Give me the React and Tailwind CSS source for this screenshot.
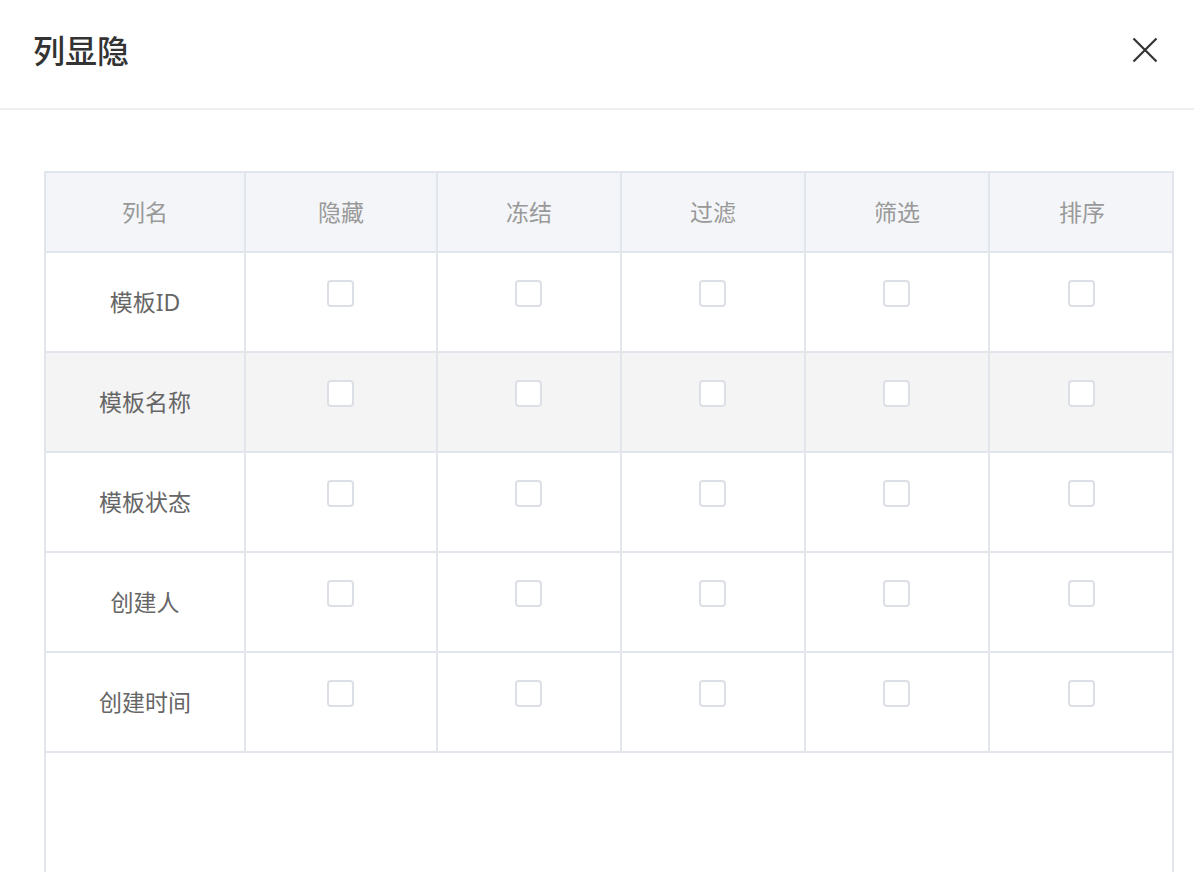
const COLUMNS = ['列名', '隐藏', '冻结', '过滤', '筛选', '排序']
const ROWS = ['模板ID', '模板名称', '模板状态', '创建人', '创建时间']

const GRID = 'grid grid-cols-[200px_192px_184px_184px_184px_184px]'

function Checkbox() {
  return <span className="block w-[27px] h-[27px] rounded-[4px] border-2 border-[#dcdfe6] bg-white -ml-[1px]" />
}

export default function App() {
  return (
    <div
      className="h-[872px] overflow-hidden bg-white"
      style={{ fontFamily: '"Noto Sans", "Noto Sans CJK SC", sans-serif' }}
    >
      {/* Header */}
      <div className="h-[110px] flex items-center justify-between pl-[33px] pr-[36px] border-b-2 border-[#eeeeee]">
        <h1 className="text-[32px] font-medium text-[#333333] leading-none -mt-[6px]">列显隐</h1>
        <button aria-label="关闭" className="w-[26px] h-[26px] flex items-center justify-center -mt-[8px]">
          <svg width="26" height="26" viewBox="0 0 26 26" fill="none" stroke="#333" strokeWidth="2.2">
            <path d="M1.5 1.5 L24.5 24.5 M24.5 1.5 L1.5 24.5" />
          </svg>
        </button>
      </div>

      {/* Table */}
      <div className="pt-[61px] pl-[44px]">
        <div className="w-[1130px] h-[760px] border-l-2 border-t-2 border-r-2 border-[#e1e6ec]">
          <div className={`${GRID} h-[80px] bg-[#f3f5f8]`}>
            {COLUMNS.map((c, i) => (
              <div
                key={c}
                className={[
                  'flex items-center justify-center text-[23px] text-[#999999] border-b-2 border-[#e1e6ec]',
                  i < COLUMNS.length - 1 ? 'border-r-2' : '',
                ].join(' ')}
              >
                {c}
              </div>
            ))}
          </div>
          {ROWS.map((r, ri) => (
            <div key={r} className={`${GRID} h-[100px] ${ri === 1 ? 'bg-[#f4f4f4]' : 'bg-white'}`}>
              <div className="flex items-center justify-center text-[23px] text-[#666666] border-r-2 border-b-2 border-[#e1e6ec]">
                {r}
              </div>
              {COLUMNS.slice(1).map((c, ci) => (
                <div
                  key={c}
                  className={[
                    'flex justify-center items-start pt-[27px] border-b-2 border-[#e1e6ec]',
                    ci < COLUMNS.length - 2 ? 'border-r-2' : '',
                  ].join(' ')}
                >
                  <Checkbox />
                </div>
              ))}
            </div>
          ))}
        </div>
      </div>
    </div>
  )
}
